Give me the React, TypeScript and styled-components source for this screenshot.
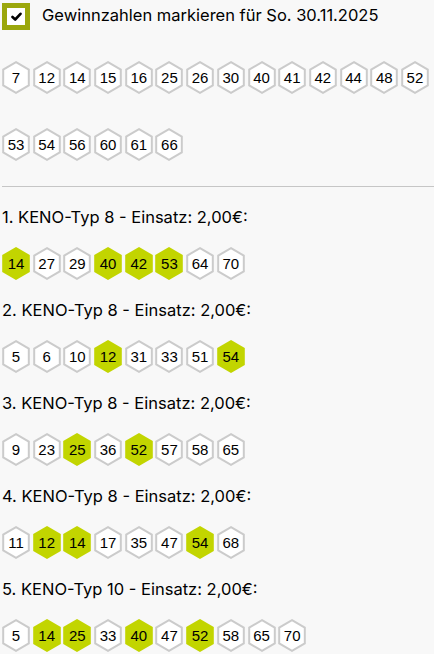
import React from "react";
import styled, { createGlobalStyle } from "styled-components";

const Global = createGlobalStyle`
  html, body { margin: 0; padding: 0; background: #f8f8f8; }
  body { font-family: Inter, "Liberation Sans", Arial, sans-serif; color: #000; }
`;

const Page = styled.div`
  padding: 2px 0 0 2px;
`;

const Header = styled.label`
  display: flex;
  align-items: center;
  gap: 12px;
  height: 28px;
`;

const Checkbox = styled.span`
  box-sizing: border-box;
  width: 28px;
  height: 27px;
  border: 5px solid #9ba70c;
  background: #fff;
  display: flex;
  align-items: center;
  justify-content: center;
`;

const HeaderText = styled.span`
  font-size: 16.5px;
  line-height: 20px;
  margin-top: -2px;
`;

const BallWrap = styled.div<{ $rowGap: number }>`
  display: flex;
  flex-wrap: wrap;
  column-gap: 2.7px;
  row-gap: ${(p) => p.$rowGap}px;
`;

const Ball = styled.div`
  display: grid;
  width: 28px;
  height: 33px;
  & > * { grid-area: 1 / 1; }
`;

const BallNum = styled.span`
  display: flex;
  align-items: center;
  justify-content: center;
  font-family: "Liberation Sans", Arial, sans-serif;
  font-size: 15px;
  color: #000;
`;

const Divider = styled.hr`
  border: none;
  border-top: 1px solid #c6c6c6;
  margin: 25px 0 0 0;
`;

const Section = styled.section`
  display: flex;
  flex-direction: column;
  gap: 20px;
  margin-top: 20px;
`;

const SectionTitle = styled.div`
  font-size: 16.5px;
  line-height: 20px;
`;

const Sections = styled.div`
  display: flex;
  flex-direction: column;
`;

const Hex: React.FC<{ hit: boolean }> = ({ hit }) => (
  <svg width="28" height="33" viewBox="0 0 28 33">
    <polygon
      points="14,1.2 26.8,8.6 26.8,24.4 14,31.8 1.2,24.4 1.2,8.6"
      fill={hit ? "#c2d500" : "#fff"}
      stroke={hit ? "#c2d500" : "#cbcbcb"}
      strokeWidth="2"
    />
  </svg>
);

const Balls: React.FC<{ nums: number[]; hits?: number[]; rowGap?: number }> = ({
  nums,
  hits = [],
  rowGap = 34,
}) => (
  <BallWrap $rowGap={rowGap}>
    {nums.map((n) => (
      <Ball key={n}>
        <Hex hit={hits.includes(n)} />
        <BallNum>{n}</BallNum>
      </Ball>
    ))}
  </BallWrap>
);

const winning = [7, 12, 14, 15, 16, 25, 26, 30, 40, 41, 42, 44, 48, 52, 53, 54, 56, 60, 61, 66];

const tips = [
  { t: "1. KENO-Typ 8 - Einsatz: 2,00€:", n: [14, 27, 29, 40, 42, 53, 64, 70] },
  { t: "2. KENO-Typ 8 - Einsatz: 2,00€:", n: [5, 6, 10, 12, 31, 33, 51, 54] },
  { t: "3. KENO-Typ 8 - Einsatz: 2,00€:", n: [9, 23, 25, 36, 52, 57, 58, 65] },
  { t: "4. KENO-Typ 8 - Einsatz: 2,00€:", n: [11, 12, 14, 17, 35, 47, 54, 68] },
  { t: "5. KENO-Typ 10 - Einsatz: 2,00€:", n: [5, 14, 25, 33, 40, 47, 52, 58, 65, 70] },
];

const WinBlock = styled.div`
  margin-top: 31px;
`;

export default function App() {
  return (
    <Page>
      <Global />
      <Header>
        <Checkbox>
          <svg width="11" height="9" viewBox="0 0 11 9">
            <path d="M1.5 5 L4.2 7.5 L9.5 1.8" fill="none" stroke="#000" strokeWidth="2.6" strokeLinecap="round" strokeLinejoin="round" />
          </svg>
        </Checkbox>
        <HeaderText>Gewinnzahlen markieren für So. 30.11.2025</HeaderText>
      </Header>
      <WinBlock>
        <Balls nums={winning} />
      </WinBlock>
      <Divider />
      <Sections>
        {tips.map((tip) => (
          <Section key={tip.t}>
            <SectionTitle>{tip.t}</SectionTitle>
            <Balls nums={tip.n} hits={winning} />
          </Section>
        ))}
      </Sections>
    </Page>
  );
}
